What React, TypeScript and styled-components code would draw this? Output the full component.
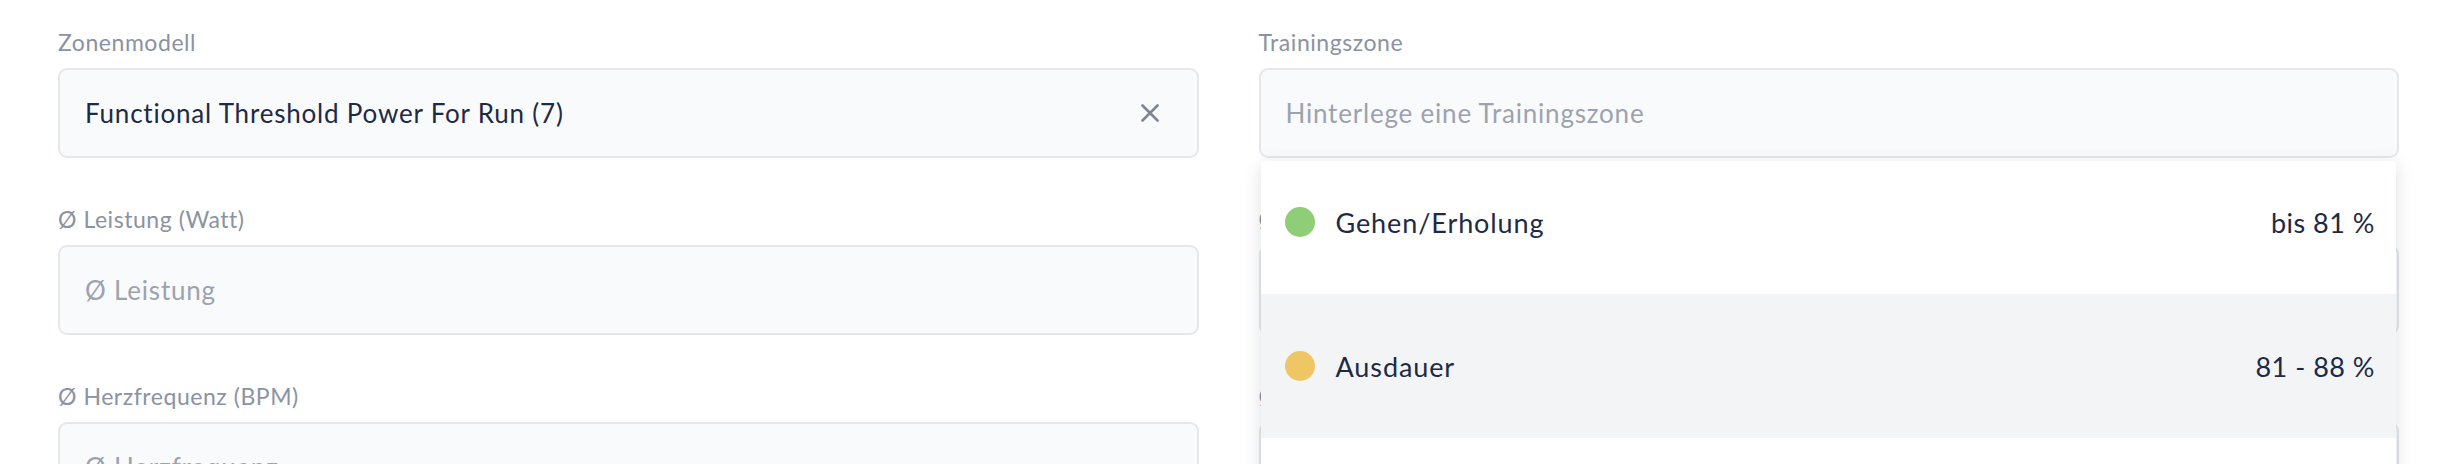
import React from 'react';
import styled, { createGlobalStyle } from 'styled-components';

const GlobalStyle = createGlobalStyle`
  html, body {
    margin: 0;
    padding: 0;
    background: #ffffff;
    overflow: hidden;
  }
  body {
    font-family: Lato, "Noto Sans", sans-serif;
    -webkit-font-smoothing: antialiased;
  }
`;

const Page = styled.div`
  display: grid;
  grid-template-columns: 1fr 1fr;
  column-gap: 60px;
  padding: 26px 57px 0 58px;
  height: 464px;
  box-sizing: border-box;
  overflow: hidden;
`;

const Column = styled.div`
  display: flex;
  flex-direction: column;
`;

const Field = styled.div`
  display: flex;
  flex-direction: column;
  margin-bottom: 45px;
`;

const Label = styled.label`
  font-size: 23px;
  line-height: 32px;
  letter-spacing: 0.55px;
  color: #8a92a3;
  margin-bottom: 10px;
  white-space: nowrap;
`;

const InputWrap = styled.div`
  position: relative;
`;

const Input = styled.div<{ $placeholder?: boolean }>`
  display: flex;
  align-items: center;
  justify-content: space-between;
  height: 90px;
  box-sizing: border-box;
  padding: 0 36px 0 25px;
  background: #f9fafb;
  border: 2px solid #e5e7eb;
  border-radius: 9px;
  font-size: 26px;
  letter-spacing: 0.8px;
  color: ${p => (p.$placeholder ? '#9ca2b0' : '#1e2a45')};
`;

const ClearButton = styled.span`
  display: flex;
  align-items: center;
  justify-content: center;
  width: 22px;
  height: 22px;
  color: #7d8595;
`;

const Dropdown = styled.div`
  position: absolute;
  top: calc(100% + 3px);
  left: 2px;
  right: 3px;
  height: 420px;
  background: #ffffff;
  border-radius: 4px;
  box-shadow: 0 4px 18px rgba(17, 24, 39, 0.13);
  overflow: hidden;
  z-index: 10;
`;

const OptionList = styled.ul`
  list-style: none;
  margin: -11px 0 0;
  padding: 0;
`;

const Option = styled.li<{ $active?: boolean }>`
  display: flex;
  align-items: center;
  height: 144px;
  padding: 0 21px 0 24px;
  background: ${p => (p.$active ? '#f3f4f6' : '#ffffff')};
  font-size: 27px;
  letter-spacing: 0.9px;
  color: #1e2a45;
`;

const Dot = styled.span<{ $color: string }>`
  width: 30px;
  height: 30px;
  border-radius: 50%;
  background: ${p => p.$color};
  margin-right: 21px;
  flex-shrink: 0;
`;

const OptionName = styled.span`
  flex: 1;
`;

const OptionRange = styled.span`
  white-space: nowrap;
  letter-spacing: 0.5px;
`;

const CloseIcon = () => (
  <svg width="18" height="18" viewBox="0 0 18 18" fill="none">
    <path d="M1.5 1.5 L16.5 16.5 M16.5 1.5 L1.5 16.5" stroke="currentColor" strokeWidth="2.6" strokeLinecap="round" />
  </svg>
);

const zones = [
  { name: 'Gehen/Erholung', range: 'bis 81 %', color: '#8fcd76' },
  { name: 'Ausdauer', range: '81 - 88 %', color: '#eec764' },
  { name: 'Tempo', range: '88 - 95 %', color: '#f0a05a' },
];

export default function App() {
  return (
    <>
      <GlobalStyle />
      <Page>
        <Column>
          <Field>
            <Label>Zonenmodell</Label>
            <Input>
              Functional Threshold Power For Run (7)
              <ClearButton>
                <CloseIcon />
              </ClearButton>
            </Input>
          </Field>
          <Field>
            <Label>Ø Leistung (Watt)</Label>
            <Input $placeholder>Ø Leistung</Input>
          </Field>
          <Field>
            <Label>Ø Herzfrequenz (BPM)</Label>
            <Input $placeholder>Ø Herzfrequenz</Input>
          </Field>
        </Column>
        <Column>
          <Field>
            <Label>Trainingszone</Label>
            <InputWrap>
              <Input $placeholder>Hinterlege eine Trainingszone</Input>
              <Dropdown>
                <OptionList>
                  {zones.map((z, i) => (
                    <Option key={z.name} $active={i === 1}>
                      <Dot $color={z.color} />
                      <OptionName>{z.name}</OptionName>
                      <OptionRange>{z.range}</OptionRange>
                    </Option>
                  ))}
                </OptionList>
              </Dropdown>
            </InputWrap>
          </Field>
          <Field>
            <Label>Ø Pace (min/km)</Label>
            <Input $placeholder>Ø Pace</Input>
          </Field>
          <Field>
            <Label>Ø Trittfrequenz (SPM)</Label>
            <Input $placeholder>Ø Trittfrequenz</Input>
          </Field>
        </Column>
      </Page>
    </>
  );
}
